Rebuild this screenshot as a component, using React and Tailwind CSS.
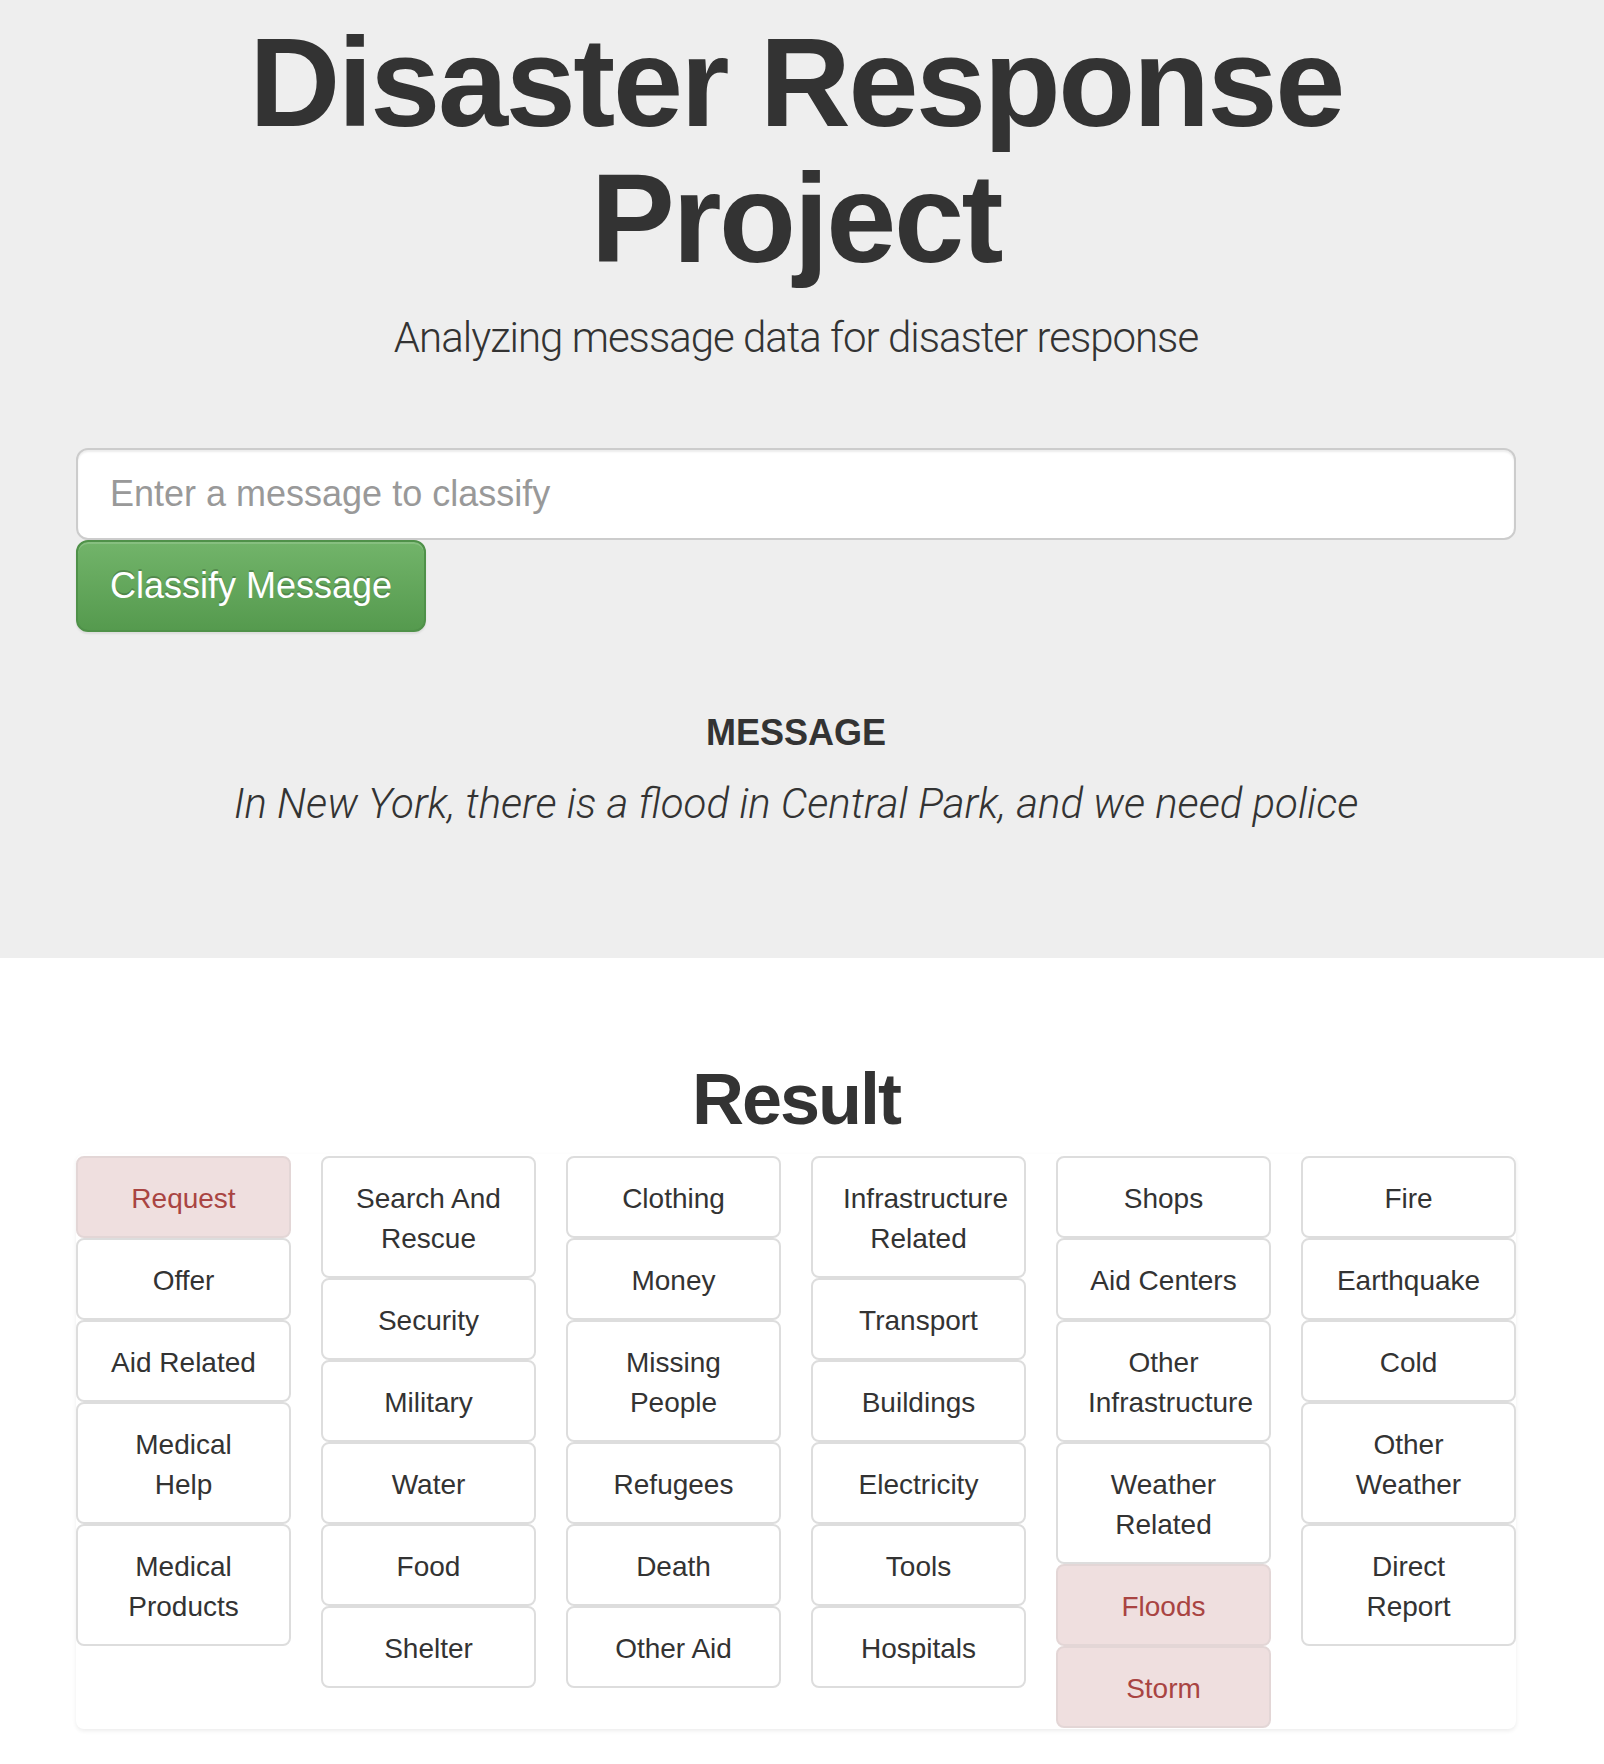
import React from "react";

const columns = [
  [
    { label: "Request", hit: true },
    { label: "Offer" },
    { label: "Aid Related" },
    { label: "Medical Help" },
    { label: "Medical Products" },
  ],
  [
    { label: "Search And Rescue" },
    { label: "Security" },
    { label: "Military" },
    { label: "Water" },
    { label: "Food" },
    { label: "Shelter" },
  ],
  [
    { label: "Clothing" },
    { label: "Money" },
    { label: "Missing People" },
    { label: "Refugees" },
    { label: "Death" },
    { label: "Other Aid" },
  ],
  [
    { label: "Infrastructure Related" },
    { label: "Transport" },
    { label: "Buildings" },
    { label: "Electricity" },
    { label: "Tools" },
    { label: "Hospitals" },
  ],
  [
    { label: "Shops" },
    { label: "Aid Centers" },
    { label: "Other Infrastructure" },
    { label: "Weather Related" },
    { label: "Floods", hit: true },
    { label: "Storm", hit: true },
  ],
  [
    { label: "Fire" },
    { label: "Earthquake" },
    { label: "Cold" },
    { label: "Other Weather" },
    { label: "Direct Report" },
  ],
];

function CategoryItem({ item }) {
  return (
    <div
      className={
        item.hit
          ? "rounded-[8px] border-2 border-[#e3d6d6] bg-[#efdfdf] px-[30px] pt-[21px] pb-[17px] text-center text-[28px] leading-[40px] text-[#a94442]"
          : "rounded-[8px] border-2 border-[#dddddd] bg-white px-[30px] pt-[21px] pb-[17px] text-center text-[28px] leading-[40px] text-[#333333]"
      }
    >
      {item.label}
    </div>
  );
}

export default function App() {
  return (
    <div className="min-h-[1764px] bg-white font-['Liberation_Sans',Arial,sans-serif] text-[#333333]">
      {/* jumbotron */}
      <div className="bg-[#eeeeee] pr-[12px] pt-[15px] pb-[124px]">
        <div className="mx-auto w-[1440px]">
          <h1 className="text-center text-[126px] font-bold leading-[136px] tracking-[-2.4px]">
            Disaster Response Project
          </h1>
          <p className="mt-[21px] text-center font-['Roboto',sans-serif] text-[42px] font-light leading-[60px] tracking-[-1px]">
            Analyzing message data for disaster response
          </p>

          <div className="mt-[80px]">
            <input
              type="text"
              placeholder="Enter a message to classify"
              className="block h-[92px] w-full rounded-[12px] border-2 border-[#cccccc] bg-white px-[32px] text-[36px] text-[#555555] shadow-[inset_0_2px_2px_rgba(0,0,0,0.075)] outline-none placeholder:text-[#999999]"
            />
            <button className="block h-[92px] w-[350px] whitespace-nowrap rounded-[12px] border-2 border-[#4f9149] bg-gradient-to-b from-[#72b46a] to-[#559a4e] px-[30px] text-[36px] text-white shadow-[inset_0_2px_0_rgba(255,255,255,0.15),0_2px_2px_rgba(0,0,0,0.075)] [text-shadow:0_-2px_0_rgba(0,0,0,0.2)]">
              Classify Message
            </button>
          </div>

          <h4 className="mt-[81px] text-center text-[36px] font-bold leading-[40px]">
            MESSAGE
          </h4>
          <p className="mt-[21px] text-center font-['Roboto',sans-serif] text-[42px] font-light italic leading-[60px]">
            In New York, there is a flood in Central Park, and we need police
          </p>
        </div>
      </div>

      {/* result */}
      <div className="pr-[12px] pt-[101px]">
        <div className="mx-auto w-[1440px]">
          <h1 className="text-center text-[72px] font-bold leading-[80px] tracking-[-2px]">
            Result
          </h1>
          <div className="mt-[15px] grid grid-cols-6 items-start gap-x-[30px] rounded-[8px] bg-white pt-[2px] pb-[1px] shadow-[0_2px_4px_rgba(0,0,0,0.075)]">
            {columns.map((col, i) => (
              <div key={i} className="flex flex-col">
                {col.map((item) => (
                  <CategoryItem key={item.label} item={item} />
                ))}
              </div>
            ))}
          </div>
        </div>
      </div>
    </div>
  );
}
